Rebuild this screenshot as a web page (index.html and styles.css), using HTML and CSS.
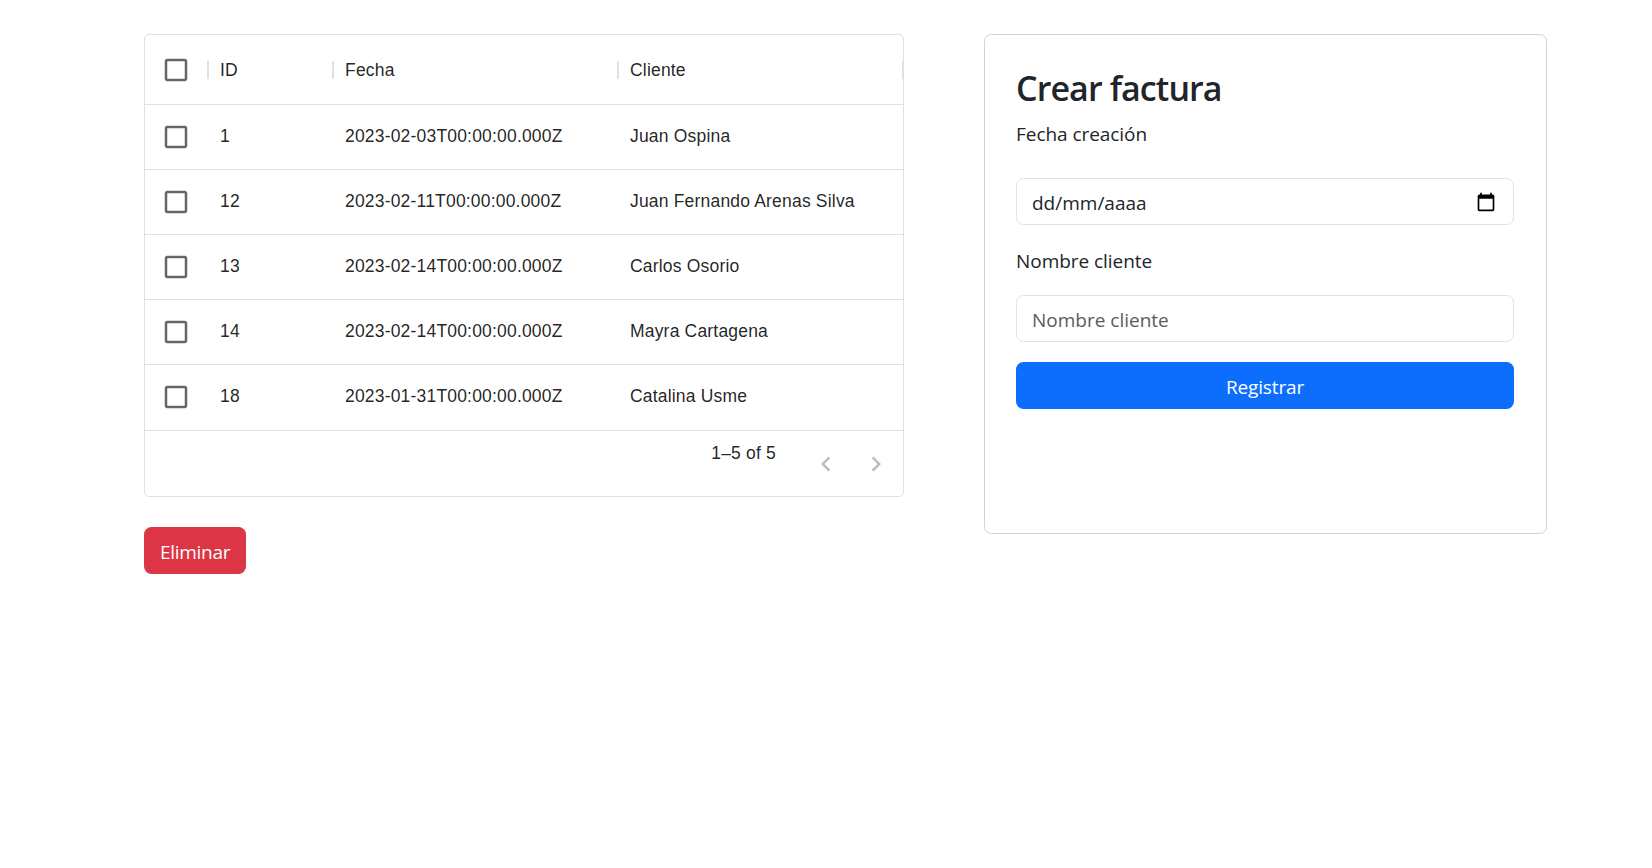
FILE: index.html
```html
<!DOCTYPE html>
<html lang="es">
<head>
<meta charset="utf-8">
<title>Facturas</title>
<link rel="stylesheet" href="styles.css">
</head>
<body>
<svg class="defs" width="0" height="0" aria-hidden="true">
  <symbol id="box" viewBox="0 0 24 24"><path d="M19 5v14H5V5h14m0-2H5c-1.1 0-2 .9-2 2v14c0 1.1.9 2 2 2h14c1.1 0 2-.9 2-2V5c0-1.1-.9-2-2-2z"/></symbol>
</svg>
<main class="page">
  <section class="list">
    <div class="grid">
      <div class="row head">
        <div class="check"><svg class="icon"><use href="#box"/></svg></div>
        <div class="cell id">ID</div>
        <div class="cell date">Fecha</div>
        <div class="cell client">Cliente</div>
      </div>
      <div class="row"><div class="check"><svg class="icon"><use href="#box"/></svg></div><div class="cell id">1</div><div class="cell date">2023-02-03T00:00:00.000Z</div><div class="cell client">Juan Ospina</div></div>
      <div class="row"><div class="check"><svg class="icon"><use href="#box"/></svg></div><div class="cell id">12</div><div class="cell date">2023-02-11T00:00:00.000Z</div><div class="cell client">Juan Fernando Arenas Silva</div></div>
      <div class="row"><div class="check"><svg class="icon"><use href="#box"/></svg></div><div class="cell id">13</div><div class="cell date">2023-02-14T00:00:00.000Z</div><div class="cell client">Carlos Osorio</div></div>
      <div class="row"><div class="check"><svg class="icon"><use href="#box"/></svg></div><div class="cell id">14</div><div class="cell date">2023-02-14T00:00:00.000Z</div><div class="cell client">Mayra Cartagena</div></div>
      <div class="row"><div class="check"><svg class="icon"><use href="#box"/></svg></div><div class="cell id">18</div><div class="cell date">2023-01-31T00:00:00.000Z</div><div class="cell client">Catalina Usme</div></div>
      <div class="foot">
        <p class="count">1–5 of 5</p>
        <div class="pager">
          <svg class="icon" viewBox="0 0 24 24"><path d="M15.41 7.41L14 6l-6 6 6 6 1.41-1.41L10.83 12z"/></svg>
          <svg class="icon" viewBox="0 0 24 24"><path d="M10 6L8.59 7.41 13.17 12l-4.58 4.59L10 18l6-6z"/></svg>
        </div>
      </div>
    </div>
    <button class="btn danger">Eliminar</button>
  </section>
  <form class="card">
    <h2 class="title">Crear factura</h2>
    <label class="label">Fecha creación</label>
    <div class="field date-field">
      <span class="date-text">dd/mm/aaaa</span>
      <svg class="calendar" viewBox="0 0 24 24"><path d="M20 3h-1V1h-2v2H7V1H5v2H4c-1.1 0-2 .9-2 2v16c0 1.100.9 2 2 2h16c1.100 0 2-.9 2-2V5c0-1.100-.9-2-2-2zm0 18H4V8h16v13z"/></svg>
    </div>
    <label class="label client-label" for="client">Nombre cliente</label>
    <input class="field" id="client" type="text" placeholder="Nombre cliente">
    <button class="btn primary" type="button">Registrar</button>
  </form>
</main>
</body>
</html>
```
FILE: styles.css
```css
* { box-sizing: border-box; }
body {
  margin: 0;
  background: #fff;
  color: #212529;
  font: 19px/30px "Open Sans", "Noto Sans", sans-serif;
}
.defs { position: absolute; }
.page {
  display: flex;
  align-items: flex-start;
  gap: 80px;
  padding: 34px 0 0 144px;
}
.list { width: 760px; }
.grid {
  height: 463px;
  overflow: hidden;
  border: 1px solid #e0e0e0;
  border-radius: 5px;
  color: rgba(0, 0, 0, .87);
  font: 17.5px/25px "Liberation Sans", Arial, sans-serif;
  letter-spacing: .01071em;
}
.row {
  display: flex;
  align-items: center;
  height: 65px;
  border-bottom: 1px solid #e0e0e0;
}
.row:nth-last-child(2) { border-bottom-color: transparent; }
.head { height: 70px; }
.icon { display: block; width: 30px; height: 30px; fill: currentColor; }
.check { width: 63px; padding-left: 16px; color: rgba(0, 0, 0, .6); }
.cell { padding: 0 0 1px 12px; white-space: nowrap; }
.id { width: 125px; }
.date { width: 285px; }
.client { width: 285px; }
.head .cell { padding-top: 2px; padding-bottom: 0; }
.head .check, .head .cell {
  background: linear-gradient(#e0e0e0, #e0e0e0) right center / 2.5px 18px no-repeat;
}
.head .check { width: 64px; }
.head .cell { padding-left: 11px; }
.head .client { margin-right: -1px; }
.foot {
  display: flex;
  justify-content: flex-end;
  align-items: flex-start;
  height: 66px;
  border-top: 1px solid #e0e0e0;
}
.count { margin: 10px 35px 0 0; }
.pager { display: flex; gap: 20px; margin: 17.5px 12px 0 0; color: rgba(0, 0, 0, .26); }
.btn {
  height: 47px;
  padding: 3px 16px 0;
  border: 0;
  border-radius: 7.5px;
  color: #fff;
  font: inherit;
  letter-spacing: -.15px;
}
.danger {
  display: block;
  width: 102px;
  margin-top: 30px;
  background: #dc3545;
  letter-spacing: -.3px;
}
.card {
  display: flex;
  flex-direction: column;
  width: 563px;
  height: 500px;
  padding: 32px 32px 30px 31px;
  border: 1px solid #d2d2d2;
  border-radius: 7.5px;
}
.title {
  margin: 0 0 10px;
  font-size: 34px;
  line-height: 42px;
  font-weight: 600;
  letter-spacing: -.9px;
}
.label { height: 30px; letter-spacing: -.05px; }
.client-label { margin: 21px 0 19px; }
.field {
  flex: none;
  width: 100%;
  height: 47px;
  padding: 2px 15px 0;
  border: 1px solid #dee2e6;
  border-radius: 7.5px;
  background: #fff;
  color: #212529;
  font: inherit;
}
.field::placeholder { color: #595c5f; opacity: 1; }
.date-field {
  display: flex;
  align-items: center;
  justify-content: space-between;
  margin-top: 29px;
}
.calendar { width: 20px; height: 20px; margin: 0 2px 1.500px 0; fill: #000; }
.primary { width: 100%; margin-top: 20px; background: #0d6efd; }
```
